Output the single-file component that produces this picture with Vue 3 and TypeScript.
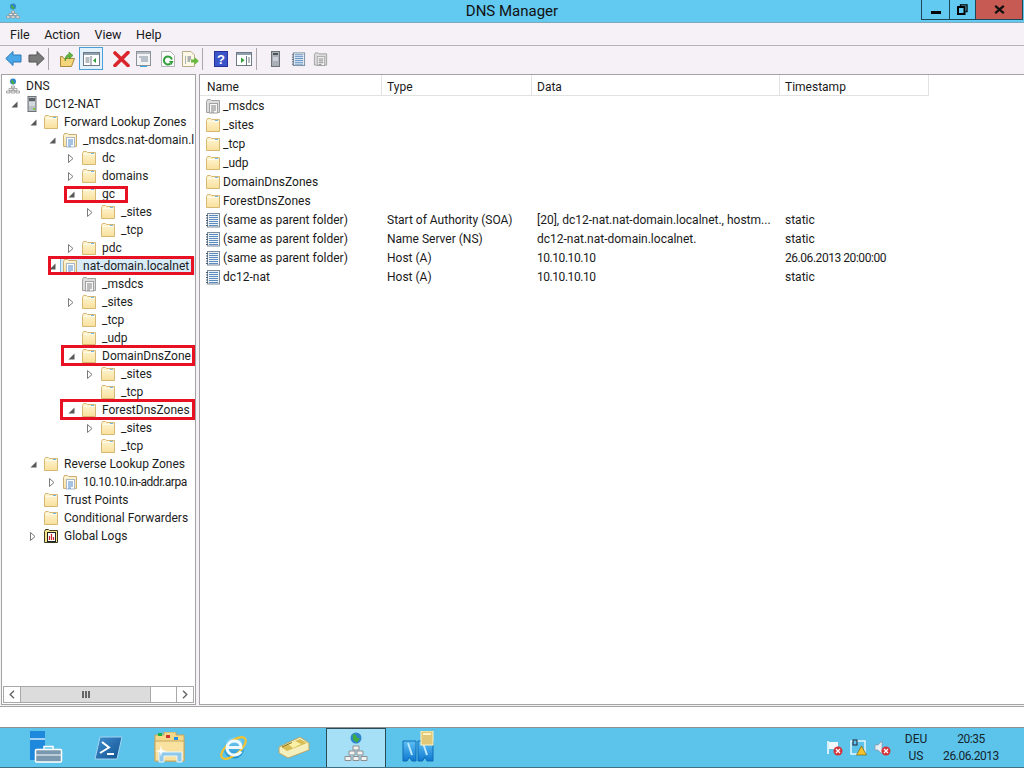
<script setup lang="ts">
type TreeRow = { label: string; level: number; icon: string; arrow?: 'open' | 'closed'; selected?: boolean; mark?: number[] }

const menus = ['File', 'Action', 'View', 'Help']

// mark = left, width, top offset from the row, height of the red box
const tree: TreeRow[] = [
  { label: 'DNS', level: 0, icon: 'dns' },
  { label: 'DC12-NAT', level: 1, icon: 'server', arrow: 'open' },
  { label: 'Forward Lookup Zones', level: 2, icon: 'folder', arrow: 'open' },
  { label: '_msdcs.nat-domain.l', level: 3, icon: 'zone', arrow: 'open' },
  { label: 'dc', level: 4, icon: 'folder', arrow: 'closed' },
  { label: 'domains', level: 4, icon: 'folder', arrow: 'closed' },
  { label: 'gc', level: 4, icon: 'folder', arrow: 'open', mark: [64, 64, 1, 17] },
  { label: '_sites', level: 5, icon: 'folder', arrow: 'closed' },
  { label: '_tcp', level: 5, icon: 'folder' },
  { label: 'pdc', level: 4, icon: 'folder', arrow: 'closed' },
  { label: 'nat-domain.localnet', level: 3, icon: 'zone', arrow: 'open', selected: true, mark: [48, 146, -1, 19] },
  { label: '_msdcs', level: 4, icon: 'grayzone' },
  { label: '_sites', level: 4, icon: 'folder', arrow: 'closed' },
  { label: '_tcp', level: 4, icon: 'folder' },
  { label: '_udp', level: 4, icon: 'folder' },
  { label: 'DomainDnsZone', level: 4, icon: 'folder', arrow: 'open', mark: [61, 134, -2, 21] },
  { label: '_sites', level: 5, icon: 'folder', arrow: 'closed' },
  { label: '_tcp', level: 5, icon: 'folder' },
  { label: 'ForestDnsZones', level: 4, icon: 'folder', arrow: 'open', mark: [60, 135, -2, 21] },
  { label: '_sites', level: 5, icon: 'folder', arrow: 'closed' },
  { label: '_tcp', level: 5, icon: 'folder' },
  { label: 'Reverse Lookup Zones', level: 2, icon: 'folder', arrow: 'open' },
  { label: '10.10.10.in-addr.arpa', level: 3, icon: 'zone', arrow: 'closed' },
  { label: 'Trust Points', level: 2, icon: 'folder' },
  { label: 'Conditional Forwarders', level: 2, icon: 'folder' },
  { label: 'Global Logs', level: 2, icon: 'logs', arrow: 'closed' },
]

const columns = [
  { label: 'Name', width: 182 },
  { label: 'Type', width: 150 },
  { label: 'Data', width: 248 },
  { label: 'Timestamp', width: 149 },
]

const records = [
  { icon: 'grayzone', name: '_msdcs', type: '', data: '', time: '' },
  { icon: 'folder', name: '_sites', type: '', data: '', time: '' },
  { icon: 'folder', name: '_tcp', type: '', data: '', time: '' },
  { icon: 'folder', name: '_udp', type: '', data: '', time: '' },
  { icon: 'folder', name: 'DomainDnsZones', type: '', data: '', time: '' },
  { icon: 'folder', name: 'ForestDnsZones', type: '', data: '', time: '' },
  { icon: 'record', name: '(same as parent folder)', type: 'Start of Authority (SOA)', data: '[20], dc12-nat.nat-domain.localnet., hostm...', time: 'static' },
  { icon: 'record', name: '(same as parent folder)', type: 'Name Server (NS)', data: 'dc12-nat.nat-domain.localnet.', time: 'static' },
  { icon: 'record', name: '(same as parent folder)', type: 'Host (A)', data: '10.10.10.10', time: '26.06.2013 20:00:00' },
  { icon: 'record', name: 'dc12-nat', type: 'Host (A)', data: '10.10.10.10', time: 'static' },
]

const rowIndent = (level: number) => (level === 0 ? 3 : 19 * level - 13)
const isNumeric = (s: string) => /^\d/.test(s)
</script>

<template>
  <div class="screen">
    <svg class="defs" width="0" height="0">
      <defs>
        <linearGradient id="fold" x1="0" y1="0" x2="0" y2="1">
          <stop offset="0" stop-color="#fff6d6" />
          <stop offset="1" stop-color="#f9e09c" />
        </linearGradient>
        <linearGradient id="psg" x1="0" y1="0" x2="1" y2="1">
          <stop offset="0" stop-color="#3f8fd0" />
          <stop offset="1" stop-color="#12508f" />
        </linearGradient>
        <linearGradient id="ieg" x1="0" y1="0" x2="0" y2="1">
          <stop offset="0" stop-color="#7fd4f4" />
          <stop offset="1" stop-color="#1d8fd0" />
        </linearGradient>
        <linearGradient id="adg" x1="0" y1="0" x2="0" y2="1">
          <stop offset="0" stop-color="#5cc0f4" />
          <stop offset="1" stop-color="#0f78d0" />
        </linearGradient>
        <symbol id="folder" viewBox="0 0 16 16">
          <path d="M1.500 3.500V14.500H14.500V2.500H6.500L5.500 1.500H2.500Z" fill="url(#fold)" stroke="#d6b873" />
          <path d="M2.500 4.500H13.500" stroke="#fffbe8" />
          <rect x="10" y="3" width="3" height="1" fill="#6fb6e6" />
        </symbol>
        <symbol id="zone" viewBox="0 0 16 16">
          <path d="M1.500 3.500V14.500H14.500V2.500H6.500L5.500 1.500H2.500Z" fill="url(#fold)" stroke="#c8ad74" />
          <rect x="4.500" y="5.500" width="8" height="9.500" fill="#fff" stroke="#a8b8cc" />
          <path d="M6 8H11M6 10H11M6 12H11M6 14H9" stroke="#4d86c8" />
        </symbol>
        <symbol id="grayzone" viewBox="0 0 16 16">
          <path d="M1.500 3.500V14.500H14.500V2.500H6.500L5.500 1.500H2.500Z" fill="#dcdcdc" stroke="#a2a2a2" />
          <rect x="4.500" y="5.500" width="8" height="9.500" fill="#f8f8f8" stroke="#a2a2a2" />
          <path d="M6 8H11M6 10H11M6 12H11M6 14H9" stroke="#808080" />
        </symbol>
        <symbol id="record" viewBox="0 0 16 16">
          <rect x="2.500" y="1.500" width="12" height="13.500" fill="#eef2f7" stroke="#7b8c9e" />
          <path d="M1 3.500H3M1 6H3M1 8.500H3M1 11H3M1 13.500H3" stroke="#4d5c6c" />
          <path d="M4 3.500H13M4 5.500H13M4 7.500H13M4 9.500H13M4 11.500H13M4 13.500H13" stroke="#5a8cc0" />
        </symbol>
        <symbol id="server" viewBox="0 0 16 16">
          <rect x="4" y="0.500" width="8" height="15" fill="#b9bfc4" stroke="#6c7378" />
          <rect x="5" y="2" width="6" height="3" fill="#5c6368" />
          <path d="M5 7H11M5 9H11" stroke="#f0f2f3" />
          <rect x="9" y="12" width="2" height="2" fill="#79c843" />
        </symbol>
        <symbol id="dns" viewBox="0 0 16 16">
          <circle cx="8" cy="3.500" r="3" fill="#2f86c9" />
          <path d="M6 2.500C7 1.500 8 2 8 3S9.500 5 10 4.500L8.500 6.500 6.500 5Z" fill="#4caf3a" />
          <path d="M6.500 8H9.500V10H6.500ZM4 10.500H7.500V12.500H4ZM8.500 10.500H12V12.500H8.500ZM1.500 13H5V15H1.500ZM6 13H10V15H6ZM11 13H14.500V15H11Z" fill="#f2f2f2" stroke="#8e8e8e" stroke-width=".7" />
        </symbol>
        <symbol id="logs" viewBox="0 0 16 16">
          <path d="M1.500 3.500V14.500H14.500V2.500H6.500L5.500 1.500H2.500Z" fill="#f8e68e" stroke="#3a3a20" />
          <rect x="4.500" y="4.500" width="8" height="9" fill="#fff" stroke="#222" />
          <path d="M6.500 12V8M8.500 12V6M10.500 12V9" stroke="#c9252b" stroke-width="1.200" />
        </symbol>
      </defs>
    </svg>

    <header class="titlebar">
      <svg class="title-icon" width="16" height="16"><use href="#dns" /></svg>
      <span class="title-text">DNS Manager</span>
      <div class="window-buttons">
        <div class="win-btn minimize"><i></i></div>
        <div class="win-btn restore"><svg width="11" height="11" viewBox="0 0 11 11"><path d="M3.500 2V.8H10V7.500H8.500" fill="none" stroke="#000" stroke-width="1.300" /><rect x="1" y="3" width="6.500" height="7" fill="none" stroke="#000" stroke-width="2" /></svg></div>
        <div class="win-btn close"><svg width="11" height="9" viewBox="0 0 11 9"><path d="M1.200.8L9.800 8.200M9.800.8L1.200 8.200" stroke="#111" stroke-width="2.200" /></svg></div>
      </div>
    </header>

    <nav class="menubar">
      <span v-for="m in menus" :key="m" class="menu-item">{{ m }}</span>
    </nav>

    <div class="toolbar">
      <svg class="t-back" width="17" height="15" viewBox="0 0 17 15"><path d="M8 .5V4H16V11H8V14.500L.8 7.500Z" fill="#4aa8e8" stroke="#2a78b8" /></svg>
      <svg class="t-fwd" width="17" height="15" viewBox="0 0 17 15"><path d="M9 .5V4H1V11H9V14.500L16.200 7.500Z" fill="#7a7a7a" stroke="#555" /></svg>
      <i class="sep s1"></i>
      <svg class="t-up" width="15" height="16" viewBox="0 0 15 16"><path d="M.5 5.500V15.500H11.500L14.500 7.500H4L2.500 5.500Z" fill="#f5d57b" stroke="#a88a3c" /><path d="M5 10C5 5 7 3.500 9 3.500V1L13 4.500 9 8V5.800C7.500 6 6 7.500 5 10Z" fill="#62b43c" stroke="#3b8a20" stroke-width=".6" /></svg>
      <div class="tool-active">
        <svg width="17" height="14" viewBox="0 0 17 14"><rect x=".5" y=".5" width="16" height="13" fill="#fff" stroke="#6e7a86" /><rect x="1" y="1" width="15" height="2" fill="#8fa0b0" /><path d="M2.500 6H6.500M2.500 8H6.500M2.500 10H6.500" stroke="#6e7a86" /><path d="M8 4V13" stroke="#6e7a86" /><path d="M13 6V11L10 8.500Z" fill="#2e9d3a" /></svg>
      </div>
      <svg class="t-del" width="17" height="16" viewBox="0 0 17 16"><path d="M2 2L15 14.500M15 1.500L2 14.500" stroke="#d9252b" stroke-width="3.600" stroke-linecap="round" /></svg>
      <svg class="t-prop" width="15" height="16" viewBox="0 0 15 16"><rect x=".5" y=".5" width="14" height="14" fill="#f3f3f3" stroke="#8b9198" /><rect x="1" y="1" width="13" height="2" fill="#b6bcc4" /><path d="M3 6H12M5 8H12M5 10H12" stroke="#7d8ea0" /><path d="M4 15.500H11" stroke="#3aa8e0" /></svg>
      <svg class="t-ref" width="14" height="16" viewBox="0 0 14 16"><path d="M.5.500H9.500L13.500 4.500V15.500H.5Z" fill="#fbfbfb" stroke="#b5b5b5" /><path d="M10.800 8.500A4 4 0 1 0 9.500 12.500" fill="none" stroke="#2f9d3a" stroke-width="2" /><path d="M8 10L12.500 10 10.500 14Z" fill="#2f9d3a" /></svg>
      <svg class="t-exp" width="17" height="16" viewBox="0 0 17 16"><path d="M.5.500H9L12.500 4V15.500H.5Z" fill="#fdf9e6" stroke="#b5ad8a" /><path d="M3 6H4M3 8H4M3 10H4M3 12H4M5.500 6H9M5.500 8H9M5.500 10H8" stroke="#5f6d7a" /><path d="M9 8.500H12.500V6L16.800 10 12.500 14V11.500H9Z" fill="#67b93c" /></svg>
      <i class="sep s2"></i>
      <svg class="t-help" width="14" height="16" viewBox="0 0 14 16"><rect width="14" height="16" fill="#26309a" /><rect x="1" y="1" width="12" height="14" fill="#3b55c9" /><text x="7" y="13" text-anchor="middle" font-family="Liberation Sans" font-weight="700" font-size="13" fill="#fff">?</text></svg>
      <svg class="t-act" width="16" height="14" viewBox="0 0 16 14"><rect x=".5" y=".5" width="15" height="13" fill="#fff" stroke="#6e7a86" /><rect x="1" y="1" width="14" height="2" fill="#8fa0b0" /><path d="M10.500 4V13" stroke="#6e7a86" /><path d="M12 6H14M12 8H14M12 10H14" stroke="#6e7a86" /><path d="M5 5.500V11L8.500 8.200Z" fill="#2e9d3a" /></svg>
      <i class="sep s3"></i>
      <svg class="t-srv" width="9" height="16"><rect x=".5" y=".5" width="8" height="15" fill="#aab0b5" stroke="#6c7378" /><rect x="2" y="2" width="5" height="2" fill="#4d5458" /><path d="M2 7H7M2 9H7" stroke="#eef" /></svg>
      <svg class="t-lst" width="15" height="16"><use href="#record" /></svg>
      <svg class="t-cpy" width="15" height="16"><use href="#grayzone" /></svg>
    </div>

    <main class="panes">
      <section class="scope">
        <ul class="tree">
          <li v-for="(row, i) in tree" :key="i" class="tree-row" :class="{ 'row-selected': row.selected }" :style="{ paddingLeft: rowIndent(row.level) + 'px' }">
            <span v-if="row.level > 0" class="arrow">
              <svg v-if="row.arrow === 'open'" width="7" height="7" viewBox="0 0 7 7"><path d="M6.500.5V6.500H.5Z" fill="#595959" /></svg>
              <svg v-else-if="row.arrow === 'closed'" width="6" height="9" viewBox="0 0 6 9"><path d="M.5.500L5 4.500.5 8.500Z" fill="#fff" stroke="#7a7a7a" /></svg>
            </span>
            <svg class="row-icon" width="16" height="16"><use :href="'#' + row.icon" /></svg>
            <span class="row-label" :class="{ num: isNumeric(row.label) }">{{ row.label }}</span>
            <span v-if="row.mark" class="mark" :style="{ left: row.mark[0] - 2 + 'px', width: row.mark[1] + 'px', top: row.mark[2] + 'px', height: row.mark[3] + 'px' }"></span>
          </li>
        </ul>
        <div class="hscroll">
          <div class="sb-btn"><svg width="6" height="9" viewBox="0 0 6 9"><path d="M5 .8L1.200 4.500 5 8.200" fill="none" stroke="#666" stroke-width="1.400" /></svg></div>
          <div class="sb-thumb"><i></i><i></i><i></i></div>
          <div class="sb-track"></div>
          <div class="sb-btn"><svg width="6" height="9" viewBox="0 0 6 9"><path d="M1 .8L4.800 4.500 1 8.200" fill="none" stroke="#666" stroke-width="1.400" /></svg></div>
        </div>
      </section>
      <div class="splitter"></div>
      <section class="results">
        <div class="list-head">
          <div v-for="c in columns" :key="c.label" class="head-cell" :style="{ width: c.width + 'px' }">{{ c.label }}</div>
        </div>
        <div v-for="(r, i) in records" :key="i" class="list-row">
          <div class="cell name-cell">
            <svg width="16" height="16"><use :href="'#' + r.icon" /></svg>
            <span>{{ r.name }}</span>
          </div>
          <div class="cell type-cell">{{ r.type }}</div>
          <div class="cell data-cell" :class="{ num: isNumeric(r.data) }">{{ r.data }}</div>
          <div class="cell time-cell" :class="{ num: isNumeric(r.time) }">{{ r.time }}</div>
        </div>
      </section>
    </main>

    <div class="statusbar"></div>

    <footer class="taskbar">
      <svg class="sm" width="33" height="33" viewBox="0 0 33 33"><rect x="0" y="0" width="15" height="29" fill="#1e88dc" /><path d="M0 8H15" stroke="#cfeafc" stroke-width="1.500" /><rect x="5.500" y="18.500" width="26" height="12.500" fill="#7b99ae" stroke="#fff" stroke-width="1.500" rx="1" /><path d="M14 18V15.500H23V18" fill="none" stroke="#fff" stroke-width="1.500" /><path d="M6 24H31" stroke="#fff" /></svg>
      <svg class="ps" width="29" height="24" viewBox="0 0 29 24"><path d="M6 1H28L23 23H1Z" fill="url(#psg)" stroke="#a4d4f2" /><path d="M8 6L15 11.500 6 17" fill="none" stroke="#fff" stroke-width="2" /><path d="M13 18H20" stroke="#fff" stroke-width="2" /></svg>
      <svg class="ex" width="32" height="31" viewBox="0 0 32 31"><path d="M1 3H10V0H22V3H30V29H1Z" fill="#f4d98a" stroke="#c6a65f" /><rect x="4" y="1" width="4" height="3" fill="#19b544" /><rect x="12" y="3" width="4" height="3" fill="#d2322d" /><rect x="20" y="5" width="4" height="3" fill="#2a8ee0" /><path d="M1 9H30V29H1Z" fill="#f9e2a0" stroke="#c6a65f" /><path d="M5 30V20H28V30H23V24H10V30Z" fill="#8fc8e8" stroke="#e8f6ff" /><path d="M7 13L8 18 13 19 8 20 7 25 6 20 1 19 6 18Z" fill="#fff" /></svg>
      <svg class="ie" width="31" height="32" viewBox="0 0 31 32"><circle cx="16" cy="16" r="10.500" fill="url(#ieg)" /><ellipse cx="15.500" cy="16" rx="15" ry="6.500" transform="rotate(-40 15.500 16)" fill="none" stroke="#f2c230" stroke-width="2.200" /><path d="M9 15.500H23C23 11 20 9 16 9S9 12 9 16 12 23 16 23C19 23 21.500 22 23 19.500" fill="none" stroke="#eefaff" stroke-width="3" /></svg>
      <svg class="bk" width="32" height="22" viewBox="0 0 32 22"><path d="M1 10L22 0 31 6V13L10 21 1 16Z" fill="#f5efbd" stroke="#b8a66a" /><path d="M3 10L22 2 29 6 9 14Z" fill="#d8bf55" /><path d="M10 7L17 4 23 7 15 11Z" fill="#fbf0a8" /><path d="M4 10L14 5.500" stroke="#8a7420" /></svg>
      <div class="task-active">
        <svg width="24" height="32" viewBox="0 0 24 32"><circle cx="12" cy="6" r="5.500" fill="#2f86c9" /><path d="M8.500 3C10 1.500 12 2.500 12 4S15 7 16 6L13 10.500 9.500 8Z" fill="#3fae3a" /><path d="M9 14H15V18H9ZM5 19H11V23H5ZM13 19H19V23H13ZM1 24.500H7V28.500H1ZM9 24.500H15V28.500H9ZM17 24.500H23V28.500H17Z" fill="#f2f2f2" stroke="#8e8e8e" /></svg>
      </div>
      <svg class="ad" width="32" height="33" viewBox="0 0 32 33"><path d="M1 10H14V30H10L7.500 26 5 30H1ZM16 10H31V30H25L23 26 20.500 30H16Z" fill="url(#adg)" stroke="#0f6cb8" /><path d="M6 12L10 24M21 12L25 24" stroke="#bce8ff" stroke-width="2" /><rect x="19" y="0" width="12" height="14" fill="#e0c878" stroke="#fff3c0" /><rect x="21" y="2" width="8" height="2" fill="#fff3c0" /></svg>
      <div class="tray">
        <svg class="tr" width="17" height="17" viewBox="0 0 17 17"><path d="M2 2V15" stroke="#fff" stroke-width="1.500" /><path d="M3 3H12V10H3Z" fill="#fff" opacity=".9" /><circle cx="12" cy="12" r="4.500" fill="#d4333a" /><path d="M10 10L14 14M14 10L10 14" stroke="#fff" stroke-width="1.300" /></svg>
        <svg class="tr" width="17" height="17" viewBox="0 0 17 17"><rect x="1" y="2" width="14" height="13" fill="none" stroke="#fff" stroke-width="1.300" /><rect x="3" y="1" width="4" height="5" fill="#5cc4ea" stroke="#223" /><path d="M11.500 7L16.500 16H6.500Z" fill="#f3c12b" stroke="#6a5400" stroke-width=".6" /></svg>
        <svg class="tr" width="17" height="17" viewBox="0 0 17 17"><path d="M1 6H4L8 2V15L4 11H1Z" fill="#e6eef4" stroke="#889" stroke-width=".6" /><circle cx="12" cy="12" r="4.500" fill="#d4333a" /><path d="M10 10L14 14M14 10L10 14" stroke="#fff" stroke-width="1.300" /></svg>
        <div class="lang"><span>DEU</span><span>US</span></div>
        <div class="clock"><span>20:35</span><span>26.06.2013</span></div>
      </div>
    </footer>
  </div>
</template>

<style>
html, body { margin: 0; overflow: hidden; }
</style>

<style scoped>
.screen {
  width: 1024px;
  height: 768px;
  display: flex;
  flex-direction: column;
  font-family: Roboto, "Liberation Sans", sans-serif;
  font-size: 12px;
  color: #1a1a1a;
  background: #f5f1f6;
  overflow: hidden;
}
.defs { position: absolute; }
.num { letter-spacing: -.45px; }
.titlebar {
  height: 22px;
  flex: none;
  display: grid;
  grid-template-columns: 1fr auto 1fr;
  align-items: start;
  background: #62c9f0;
  border-bottom: 1px solid #7fa9bb;
}
.title-icon { margin: 3px 0 0 5px; }
.title-text {
  font-size: 15px;
  line-height: 23px;
  color: #111;
}
.window-buttons {
  display: flex;
  justify-self: end;
  height: 20px;
  margin-right: 1px;
  border: 1px solid #1f4656;
  border-top: none;
  box-sizing: border-box;
}
.win-btn { display: flex; align-items: center; justify-content: center; }
.minimize { width: 27px; border-right: 1px solid #1f4656; }
.minimize i { width: 10px; height: 3px; background: #000; margin-top: 5px; }
.restore { width: 25px; border-right: 1px solid #1f4656; }
.close { width: 46px; background: #c75a52; }

.menubar {
  height: 22px;
  flex: none;
  display: flex;
  align-items: center;
  padding-left: 10px;
  gap: 14.500px;
  font-size: 12.500px;
  border-bottom: 1px solid #b4b4b4;
}
.toolbar {
  height: 28px;
  box-sizing: border-box;
  padding-bottom: 3px;
  flex: none;
  display: flex;
  align-items: center;
}
.toolbar > * { flex: none; }
.sep { width: 1px; height: 22px; background: #a8a8a8; }
.t-back { margin-left: 5px; }
.t-fwd { margin-left: 6px; }
.s1 { margin-left: 3px; }
.t-up { margin-left: 11px; }
.tool-active {
  width: 22px;
  height: 21px;
  margin-left: 4px;
  border: 1px solid #4a9fd8;
  background: #e3f1fb;
  display: flex;
  align-items: center;
  justify-content: center;
}
.t-del { margin-left: 10px; }
.t-prop { margin-left: 6px; }
.t-ref { margin-left: 10px; }
.t-exp { margin-left: 7px; }
.s2 { margin-left: 3px; }
.t-help { margin-left: 11px; }
.t-act { margin-left: 8px; }
.s3 { margin-left: 4px; }
.t-srv { margin-left: 14px; }
.t-lst { margin-left: 11px; }
.t-cpy { margin-left: 7px; }

.panes {
  flex: 1;
  min-height: 0;
  display: flex;
  padding-bottom: 1px;
}
.scope {
  width: 193px;
  flex: none;
  margin-left: 1px;
  border: 1px solid #a4a4a4;
  background: #fff;
  display: flex;
  flex-direction: column;
}
.tree { list-style: none; margin: 2px 0 0; padding: 0; flex: 1; overflow: hidden; }
.tree-row {
  height: 18px;
  display: flex;
  align-items: center;
  position: relative;
  white-space: nowrap;
}
.row-selected::before {
  content: "";
  position: absolute;
  left: 58px;
  right: 0;
  top: 0;
  bottom: 0;
  background: #d9ebf7;
  border-left: 1px solid #7fb6dc;
}
.arrow { width: 12px; height: 12px; margin-right: 4px; flex: none; display: flex; align-items: center; justify-content: center; }
.row-icon { flex: none; position: relative; }
.row-label { margin-left: 5px; color: #1d1d1d; position: relative; }
.mark {
  position: absolute;
  box-sizing: border-box;
  border: 3px solid #e81123;
  pointer-events: none;
}
.hscroll {
  height: 17px;
  margin: 0 1px 1px;
  display: flex;
  border: 1px solid #a8a8a8;
  box-sizing: border-box;
  background: #fff;
}
.sb-btn { width: 16px; display: flex; align-items: center; justify-content: center; }
.sb-thumb {
  width: 129px;
  background: #dcdcdc;
  border-left: 1px solid #a8a8a8;
  border-right: 1px solid #a8a8a8;
  display: flex;
  align-items: center;
  justify-content: center;
  gap: 1px;
}
.sb-thumb i { width: 2px; height: 7px; background: #666; }
.sb-track { flex: 1; border-right: 1px solid #a8a8a8; }
.splitter { width: 3px; flex: none; background: #f5f1f6; }
.results {
  flex: 1;
  min-width: 0;
  background: #fff;
  border: 1px solid #a4a4a4;
  border-right: none;
  overflow: hidden;
}
.list-head { display: flex; height: 21px; }
.head-cell {
  box-sizing: border-box;
  padding: 3px 0 0 5px;
  line-height: 18px;
  height: 21px;
  border-right: 1px solid #e2e2e2;
  border-bottom: 1px solid #e2e2e2;
  flex: none;
}
.head-cell:first-child { padding-left: 7px; }
.list-row { display: flex; height: 19px; align-items: center; white-space: nowrap; }
.cell { flex: none; box-sizing: border-box; }
.name-cell { width: 182px; display: flex; align-items: center; gap: 2px; padding-left: 5px; }
.type-cell { width: 150px; padding-left: 5px; }
.data-cell { width: 248px; padding-left: 5px; }
.time-cell { padding-left: 5px; }

.statusbar {
  height: 22px;
  flex: none;
  background: #fff;
  border-top: 1px solid #a4a4a4;
  border-bottom: 1px solid #8f8f8f;
  box-sizing: border-box;
}
.taskbar {
  height: 40px;
  flex: none;
  display: flex;
  align-items: center;
  background: #5cc4ea;
  border-bottom: 1px solid #3f6f83;
  box-sizing: border-box;
  color: #15252e;
}
.taskbar > svg { flex: none; }
.sm { margin-left: 30px; }
.ps { margin-left: 31px; }
.ex { margin-left: 31px; }
.ie { margin-left: 32px; }
.bk { margin-left: 29px; }
.task-active {
  width: 60px;
  height: 39px;
  margin-left: 16px;
  background: #a6e0f6;
  border: 1px solid #2a4a58;
  border-bottom: none;
  box-sizing: border-box;
  display: flex;
  align-items: center;
  justify-content: center;
}
.ad { margin-left: 16px; }
.tray { margin-left: auto; display: flex; align-items: center; }
.tr { margin-right: 7px; }
.lang, .clock { display: flex; flex-direction: column; align-items: center; line-height: 17px; }
.lang { margin-left: 3px; width: 30px; }
.clock { width: 70px; margin: 0 18px 0 5px; letter-spacing: -.45px; }
</style>
